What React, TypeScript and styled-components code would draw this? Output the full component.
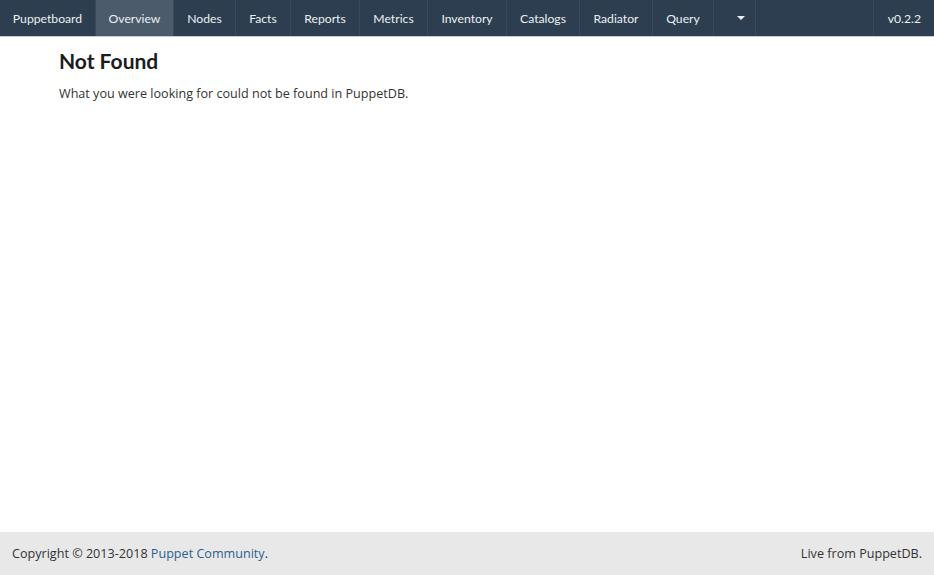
import React from "react";
import styled, { createGlobalStyle } from "styled-components";

const Global = createGlobalStyle`
  html, body { margin: 0; padding: 0; height: 100%; }
  body { background: #fff; font-family: "Open Sans", sans-serif; }
  #root { height: 100%; }
`;

const Page = styled.div`
  display: flex;
  flex-direction: column;
  height: 575px;
`;

const NavBar = styled.nav`
  display: flex;
  align-items: stretch;
  height: 36px;
  background: #2c3e50;
  border-bottom: 1px solid #c9ccd0;
  font-family: Lato, sans-serif;
  font-size: 12.2px;
`;

const NavItem = styled.a<{ $active?: boolean; $w?: number }>`
  display: flex;
  align-items: center;
  justify-content: center;
  width: ${(p) => p.$w}px;
  box-sizing: border-box;
  color: #ecf0f1;
  text-decoration: none;
  background: ${(p) => (p.$active ? "#4b5b6b" : "transparent")};
  border-right: 1px solid #3a4a5b;
`;

const Spacer = styled.div`
  flex: 1;
  border-right: 1px solid #3a4a5b;
`;

const Version = styled.div`
  display: flex;
  align-items: center;
  padding: 0 13px 0 14px;
  color: #ecf0f1;
`;

const Caret = styled.span`
  width: 0;
  height: 0;
  margin-left: 12px;
  border-left: 4px solid transparent;
  border-right: 4px solid transparent;
  border-top: 4px solid #ecf0f1;
`;

const Main = styled.main`
  flex: 1;
  padding: 11px 59px;
`;

const Title = styled.h1`
  margin: 0;
  font-family: Lato, sans-serif;
  font-weight: 700;
  font-size: 21px;
  color: #1c1c1c;
  line-height: 26px;
`;

const Text = styled.p`
  margin: 11px 0 0;
  font-size: 12.6px;
  color: #333;
`;

const Footer = styled.footer`
  height: 43px;
  background: #e8e8e8;
  display: flex;
  align-items: center;
  justify-content: space-between;
  padding: 0 12px;
  font-size: 12.6px;
  color: #333;
`;

const Link = styled.a`
  color: #2c5f8f;
  text-decoration: none;
`;

const items: [string, number][] = [
  ["Puppetboard", 96],
  ["Overview", 78],
  ["Nodes", 62],
  ["Facts", 55],
  ["Reports", 69],
  ["Metrics", 68],
  ["Inventory", 79],
  ["Catalogs", 73],
  ["Radiator", 73],
  ["Query", 61],
];

export default function App() {
  return (
    <Page>
      <Global />
      <NavBar>
        {items.map(([label, w]) => (
          <NavItem key={label} $w={w} $active={label === "Overview"} href="#">
            {label}
          </NavItem>
        ))}
        <NavItem $w={42} href="#">
          <Caret />
        </NavItem>
        <Spacer />
        <Version>v0.2.2</Version>
      </NavBar>
      <Main>
        <Title>Not Found</Title>
        <Text>What you were looking for could not be found in PuppetDB.</Text>
      </Main>
      <Footer>
        <span>
          Copyright © 2013-2018 <Link href="#">Puppet Community</Link>.
        </span>
        <span>Live from PuppetDB.</span>
      </Footer>
    </Page>
  );
}
